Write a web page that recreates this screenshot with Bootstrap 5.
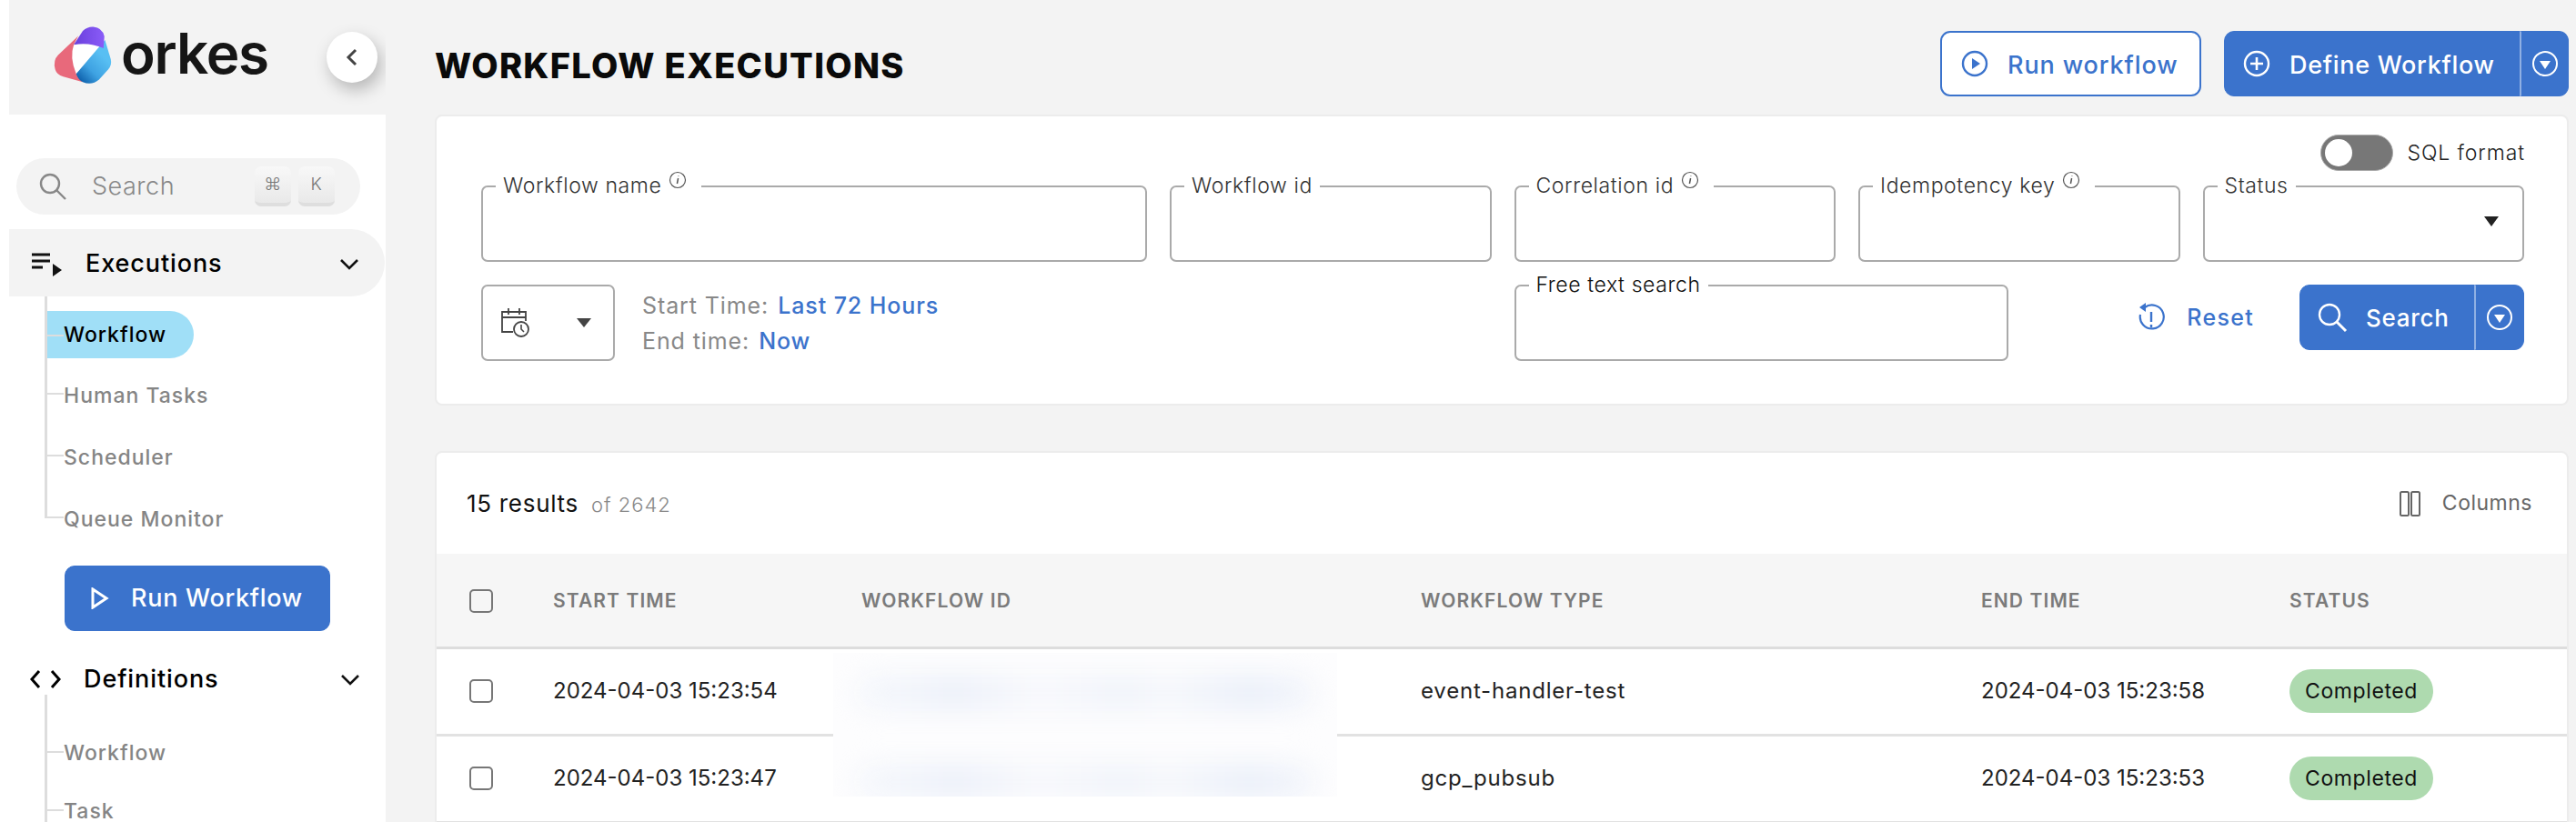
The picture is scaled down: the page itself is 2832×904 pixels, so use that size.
<!DOCTYPE html>
<html lang="en">
<head>
  <meta charset="UTF-8" />
  <title>Workflow Executions</title>
  <link href="https://cdn.jsdelivr.net/npm/bootstrap@5.3.3/dist/css/bootstrap.min.css" rel="stylesheet" />
  <style>
    html, body { height: 904px; overflow: hidden; }
    body { font-family: "Inter", "Liberation Sans", sans-serif; background: #f3f3f3; color: #111; font-size: 25px; }

    .side-bar { width: 424px; height: 904px; background: #fff; flex: none; overflow: hidden; }
    .side-head { height: 126px; margin-left: 10px; background: #f3f3f3; padding: 28px 9px 0 48px; }
    .side-head > svg { flex: none; }
    .logo-word { font-size: 62px; font-weight: 600; line-height: 62px; letter-spacing: -1.2px; color: #161616; margin-left: 9px; }
    .collapse-btn { width: 56px; height: 56px; margin: 7px 0 0 auto; border: 0; border-radius: 50%; background: #fff; box-shadow: 4px 8px 18px rgba(0,0,0,.25); padding: 0; }
    .side-search { height: 62px; margin: 48px 28px 16px 18px; background: #f3f3f3; border-radius: 31px; padding: 0 28px 0 25px; color: #888; font-size: 27px; font-weight: 300; letter-spacing: .5px; }
    .key-cap { width: 40px; height: 44px; border-radius: 7px; background: linear-gradient(#f8f8f8, #e9e9e9); border-bottom: 4px solid #dedede; font-size: 19px; color: #777; }
    .group-row { height: 74px; padding: 2px 29px 0 24px; font-size: 27px; font-weight: 500; color: #000; letter-spacing: .9px; }
    .group-open { margin-left: 10px; padding-left: 25px; background: #f3f3f3; border-radius: 0 37px 37px 0; height: 74px; width: 413px; }
    .group-icon { width: 34px; margin-right: 25px; }
    .tree-list { margin: 0 0 0 49px; padding: 16px 0 0; list-style: none; border-left: 3px solid #ddd; }
    .tree-item { position: relative; height: 68px; padding-left: 18px; font-size: 23px; font-weight: 500; color: #858585; letter-spacing: 1px; }
    .tree-item::before { content: ""; position: absolute; left: 0; top: 33px; width: 18px; height: 2px; background: #ddd; }
    .tree-first { height: 52px; margin-bottom: 5px; line-height: 52px; color: #000; width: 161px; background: #a0dff7; border-radius: 0 26px 26px 0; }
    .tree-first::before { top: 26px; }
    .tree-item.tree-plain { display: flex; align-items: center; padding-top: 5px; }
    .tree-last::after { content: ""; position: absolute; left: -3px; top: 35px; width: 3px; height: 33px; background: #fff; }
    .tree-item.tree-short { height: 64px; padding-top: 2px; }
    .tree-short::before { top: 31px; }
    .tree-defs { margin-top: -17px; padding-top: 31px; }
    .side-run { width: 292px; height: 72px; margin: 19px 0 17px 71px; border-radius: 11px; font-size: 27px; font-weight: 500; letter-spacing: 1px; }

    .main-area { padding: 0 8px 0 54px; min-width: 0; }
    .page-head { height: 126px; padding-top: 34px; }
    .page-title { font-size: 38px; font-weight: 800; margin: 0; letter-spacing: 1.3px; color: #0a0a0a; }
    .blue-btn { --bs-btn-bg: #3b73cc; --bs-btn-border-color: #3b73cc; --bs-btn-color: #fff; --bs-btn-hover-bg: #3b73cc; --bs-btn-hover-color: #fff; font-size: 27px; font-weight: 500; height: 72px; border-radius: 11px; display: flex; align-items: center; letter-spacing: .7px; }
    .outline-btn { width: 287px; height: 72px; background: #fff; border: 2px solid #3b73cc; color: #3b73cc; border-radius: 11px; font-size: 27px; font-weight: 500; margin-right: 25px; padding: 0 0 0 21px; letter-spacing: .9px; }
    .split-end { border-left: 2px solid #8fb0e3 !important; padding: 0; justify-content: center; }

    .panel-box { background: #fff; border: 2px solid #ececec; border-radius: 8px; }
    .filter-box { height: 320px; padding: 20px 47px 0 49px; margin-bottom: 50px; }
    .sql-toggle { height: 40px; margin: 0 -1px 16px 0; font-size: 23px; font-weight: 300; color: #222; letter-spacing: .9px; }
    .toggle-track { width: 80px; height: 40px; border-radius: 20px; background: #777; margin-right: 15px; padding: 4px; border: 1px solid #aaa; }
    .toggle-knob { width: 30px; height: 30px; border-radius: 50%; background: #fff; }
    .field-grid { display: grid; grid-template-columns: repeat(6, 1fr); column-gap: 25px; row-gap: 25px; }
    .field-box { position: relative; height: 84px; border: 2px solid #aaa; border-radius: 7px; }
    .field-wide { grid-column: span 2; }
    .field-label { position: absolute; left: 14px; top: -16px; height: 28px; line-height: 28px; padding: 0 8px; background: #fff; font-size: 23px; font-weight: 300; color: #333; display: flex; letter-spacing: .6px; }
    .info-mark { display: inline-block; width: 20px; height: 20px; margin: -2px 8px 0 8px; }
    .status-caret { position: absolute; right: 26px; top: 32px; width: 0; height: 0; border: 8px solid transparent; border-top: 11px solid #222; border-bottom: 0; }
    .date-cell { grid-column: span 3; }
    .date-box { width: 147px; height: 84px; border: 2px solid #aaa; border-radius: 7px; margin-right: 30px; padding: 0 24px 0 19px; }
    .date-caret { width: 0; height: 0; border: 8px solid transparent; border-top: 10px solid #444; border-bottom: 0; }
    .date-line { height: 39px; padding-top: 2px; font-size: 25px; font-weight: 400; color: #888; letter-spacing: .9px; }
    .date-line span { color: #3b73cc; font-weight: 500; margin-left: 10px; }
    .query-cell { grid-column: span 3; }
    .free-box { width: 543px; }
    .reset-link { color: #3b73cc; font-size: 25px; font-weight: 500; margin-right: 50px; letter-spacing: 1.3px; padding-top: 2px; }

    .result-box { overflow: hidden; height: 500px; position: relative; }
    .result-head { height: 111px; padding: 0 38px 0 33px; }
    .result-count { font-size: 26px; font-weight: 400; color: #111; letter-spacing: .7px; }
    .result-of { font-size: 22px; font-weight: 300; color: #888; margin-left: 14px; letter-spacing: 1px; }
    .column-link { font-size: 23px; font-weight: 400; color: #666; letter-spacing: .5px; }
    .run-table { table-layout: fixed; width: 100%; margin: 0; --bs-table-bg: transparent; }
    .run-table th { height: 103px; background: #f6f6f6; font-size: 21px; font-weight: 600; color: #7b7b7b; padding: 2px 0 0; vertical-align: middle; border-bottom: 3px solid #ddd; letter-spacing: 1.1px; }
    .run-table td { height: 96px; font-size: 24px; font-weight: 400; color: #222; padding: 0; vertical-align: middle; border-bottom: 3px solid #e2e2e2; }
    .run-table .type-cell { letter-spacing: .8px; }
    .row-check { width: 26px; height: 26px; border: 2px solid #777; border-radius: 5px; margin-left: 36px; }
    .status-pill { display: inline-block; width: 158px; height: 48px; line-height: 48px; border-radius: 24px; background: #aedaaf; color: #111; text-align: center; font-size: 23px; letter-spacing: .6px; }
    .blur-patch { position: absolute; left: 436px; top: 220px; width: 554px; height: 158px; background: #fdfdfe; overflow: hidden; }
    .blur-smear { height: 40px; margin: 24px 24px 0; border-radius: 20px; background: linear-gradient(90deg, #f6f8fc, #ecf0f9 22%, #f7f8fc 40%, #f0f3fa 58%, #f5f7fb 68%, #eaeff9 86%, #f4f6fb); filter: blur(14px); }
    .blur-smear + .blur-smear { margin-top: 58px; }
  </style>
</head>
<body>
  <div class="d-flex">
    <aside class="side-bar">
      <div class="side-head d-flex">
        <svg width="66" height="68" viewBox="50 24 200 205" aria-hidden="true">
          <defs>
            <linearGradient id="blueFill" x1="0.2" y1="1" x2="0.75" y2="0.35"><stop offset="0" stop-color="#0f62ad"/><stop offset=".45" stop-color="#3ea2e2"/><stop offset="1" stop-color="#58bff3"/></linearGradient>
            <linearGradient id="purpleFill" x1="0" y1="0.5" x2="1" y2="0.5"><stop offset="0" stop-color="#6a3fdc"/><stop offset="1" stop-color="#8a5cf8"/></linearGradient>
          </defs>
          <path fill="#fff" d="M120 88Q170 80 222 100L128 185Q105 130 120 88Z"/>
          <path fill="#e8697b" d="M135 58L68 122Q50 140 58 170Q63 188 85 194L150 212L128 185Q105 130 120 88Z"/>
          <path d="M224 72L243 135Q248 155 235 170L205 203Q180 225 150 212Q135 205 128 185Z" style="fill:url(#blueFill)"/>
          <path d="M120 88L150 42Q165 27 185 28Q215 30 222 60L219 99Q170 78 120 88Z" style="fill:url(#purpleFill)"/>
        </svg>
        <span class="logo-word">orkes</span>
        <button class="collapse-btn d-flex align-items-center justify-content-center" type="button" aria-label="Collapse">
          <svg width="16" height="22" viewBox="0 0 16 22"><path d="M12 3 4 11l8 8" fill="none" stroke="#444" stroke-width="3"/></svg>
        </button>
      </div>

      <div class="side-search d-flex align-items-center">
        <svg width="30" height="30" viewBox="0 0 30 30" class="me-4"><circle cx="12" cy="12" r="10" fill="none" stroke="#888" stroke-width="2.4"/><path d="M19 19l10 10" stroke="#888" stroke-width="2.4"/></svg>
        <span class="ms-1 flex-grow-1">Search</span>
        <span class="key-cap d-flex align-items-center justify-content-center me-2">⌘</span>
        <span class="key-cap d-flex align-items-center justify-content-center">K</span>
      </div>

      <div class="group-row group-open d-flex align-items-center">
        <svg class="group-icon" height="28" viewBox="0 0 34 28"><path d="M0 4h20M0 11h20M0 18h12" stroke="#111" stroke-width="3"/><path d="M23 14l10 7-10 7z" fill="#111"/></svg>
        <span class="flex-grow-1">Executions</span>
        <svg width="20" height="13" viewBox="0 0 20 13"><path d="M1 2l9 9 9-9" fill="none" stroke="#111" stroke-width="2.6"/></svg>
      </div>
      <ul class="tree-list">
        <li class="tree-item tree-first">Workflow</li>
        <li class="tree-item tree-plain">Human Tasks</li>
        <li class="tree-item tree-plain">Scheduler</li>
        <li class="tree-item tree-plain tree-last">Queue Monitor</li>
      </ul>
      <button class="btn blue-btn side-run" type="button">
        <svg width="20" height="24" viewBox="0 0 20 24" class="ms-3 me-4"><path d="M2 2l15 10L2 22z" fill="none" stroke="#fff" stroke-width="3"/></svg>
        Run Workflow
      </button>

      <div class="group-row d-flex align-items-center" style="height:70px">
        <svg class="group-icon" height="22" viewBox="0 0 34 22" style="margin-left:9px"><path d="M10 2l-8 9 8 9M24 2l8 9-8 9" fill="none" stroke="#000" stroke-width="3"/></svg>
        <span class="flex-grow-1">Definitions</span>
        <svg width="20" height="13" viewBox="0 0 20 13"><path d="M1 2l9 9 9-9" fill="none" stroke="#111" stroke-width="2.6"/></svg>
      </div>
      <ul class="tree-list tree-defs">
        <li class="tree-item tree-plain tree-short">Workflow</li>
        <li class="tree-item tree-plain tree-short">Task</li>
      </ul>
    </aside>

    <main class="main-area flex-grow-1">
      <div class="page-head d-flex justify-content-between">
        <h1 class="page-title mt-3">WORKFLOW EXECUTIONS</h1>
        <div class="d-flex">
          <button class="outline-btn d-flex align-items-center" type="button">
            <svg width="30" height="30" viewBox="0 0 30 30" style="margin-right:21px"><circle cx="15" cy="15" r="13" fill="none" stroke="#3b73cc" stroke-width="2.4"/><path d="M12 9l9 6-9 6z" fill="#3b73cc"/></svg>
            <span class="pt-1">Run workflow</span>
          </button>
          <div class="btn-group">
            <button class="btn blue-btn" type="button" style="width:326px;padding-left:20px">
              <svg width="30" height="30" viewBox="0 0 30 30" style="margin-right:21px"><circle cx="15" cy="15" r="13" fill="none" stroke="#fff" stroke-width="2.4"/><path d="M15 8v14M8 15h14" stroke="#fff" stroke-width="2.6"/></svg>
              <span class="pt-1">Define Workflow</span>
            </button>
            <button class="btn blue-btn split-end" type="button" style="width:54px" aria-label="More">
              <svg width="30" height="30" viewBox="0 0 30 30"><circle cx="15" cy="15" r="13" fill="none" stroke="#fff" stroke-width="2"/><path d="M9 12h12l-6 9z" fill="#fff"/></svg>
            </button>
          </div>
        </div>
      </div>

      <section class="panel-box filter-box">
        <div class="sql-toggle d-flex justify-content-end align-items-center">
          <span class="toggle-track d-flex"><span class="toggle-knob"></span></span>
          SQL format
        </div>
        <div class="field-grid">
          <div class="field-box field-wide"><span class="field-label">Workflow name<svg class="info-mark" viewBox="0 0 20 20"><circle cx="10" cy="10" r="8.5" fill="none" stroke="#555" stroke-width="1.2"/><path d="M10.6 8l-1.2 6M10.9 5.2v.6" stroke="#555" stroke-width="1.5"/></svg></span></div>
          <div class="field-box"><span class="field-label">Workflow id</span></div>
          <div class="field-box"><span class="field-label">Correlation id<svg class="info-mark" viewBox="0 0 20 20"><circle cx="10" cy="10" r="8.5" fill="none" stroke="#555" stroke-width="1.2"/><path d="M10.6 8l-1.2 6M10.9 5.2v.6" stroke="#555" stroke-width="1.5"/></svg></span></div>
          <div class="field-box"><span class="field-label">Idempotency key<svg class="info-mark" viewBox="0 0 20 20"><circle cx="10" cy="10" r="8.5" fill="none" stroke="#555" stroke-width="1.2"/><path d="M10.6 8l-1.2 6M10.9 5.2v.6" stroke="#555" stroke-width="1.5"/></svg></span></div>
          <div class="field-box"><span class="field-label">Status</span><span class="status-caret"></span></div>

          <div class="date-cell d-flex align-items-center">
            <div class="date-box d-flex align-items-center justify-content-between">
              <svg width="32" height="34" viewBox="0 0 32 34"><path d="M14 27H2V5h26v10M2 11h26M9 1v7M21 1v7" fill="none" stroke="#444" stroke-width="1.8"/><circle cx="23" cy="24" r="8" fill="#fff" stroke="#444" stroke-width="1.8"/><path d="M23 19v5l3 3" fill="none" stroke="#444" stroke-width="1.6"/></svg>
              <span class="date-caret"></span>
            </div>
            <div>
              <div class="date-line">Start Time:<span>Last 72 Hours</span></div>
              <div class="date-line">End time:<span>Now</span></div>
            </div>
          </div>
          <div class="query-cell d-flex">
            <div class="field-box free-box"><span class="field-label" style="color:#111">Free text search</span></div>
            <div class="ms-auto d-flex align-items-start">
              <span class="reset-link d-flex align-items-center" style="height:72px">
                <svg width="30" height="34" viewBox="0 0 30 34" class="me-4"><path d="M8 5a13 13 0 1 1-5 8" fill="none" stroke="#3b73cc" stroke-width="2.2"/><path d="M9 0v10L2 5z" fill="#3b73cc"/><path d="M15 10v11M15 24v3" stroke="#3b73cc" stroke-width="2.4"/></svg>
                Reset
              </span>
              <div class="btn-group">
                <button class="btn blue-btn" type="button" style="width:193px;padding-left:18px;font-size:26px">
                  <svg width="34" height="34" viewBox="0 0 34 34" style="margin-right:20px"><circle cx="14" cy="14" r="11" fill="none" stroke="#fff" stroke-width="2.4"/><path d="M22 22l10 10" stroke="#fff" stroke-width="3"/></svg>
                  Search
                </button>
                <button class="btn blue-btn split-end" type="button" style="width:55px" aria-label="More">
                  <svg width="30" height="30" viewBox="0 0 30 30"><circle cx="15" cy="15" r="13" fill="none" stroke="#fff" stroke-width="2"/><path d="M9 12h12l-6 9z" fill="#fff"/></svg>
                </button>
              </div>
            </div>
          </div>
        </div>
      </section>

      <section class="panel-box result-box">
        <div class="result-head d-flex align-items-center justify-content-between">
          <div><span class="result-count">15 results</span><span class="result-of">of 2642</span></div>
          <div class="column-link d-flex align-items-center">
            <svg width="23" height="28" viewBox="0 0 23 28" class="me-4"><rect x="1" y="1" width="9" height="26" rx="1.5" fill="none" stroke="#666" stroke-width="2"/><rect x="13" y="1" width="9" height="26" rx="1.5" fill="none" stroke="#666" stroke-width="2"/></svg>
            Columns
          </div>
        </div>
        <table class="table run-table">
          <colgroup><col style="width:128px"><col style="width:339px"><col style="width:615px"><col style="width:616px"><col style="width:339px"><col></colgroup>
          <thead>
            <tr><th><div class="row-check"></div></th><th>START TIME</th><th>WORKFLOW ID</th><th>WORKFLOW TYPE</th><th>END TIME</th><th>STATUS</th></tr>
          </thead>
          <tbody>
            <tr><td><div class="row-check"></div></td><td>2024-04-03 15:23:54</td><td></td><td class="type-cell">event-handler-test</td><td>2024-04-03 15:23:58</td><td><span class="status-pill">Completed</span></td></tr>
            <tr><td><div class="row-check"></div></td><td>2024-04-03 15:23:47</td><td></td><td class="type-cell">gcp_pubsub</td><td>2024-04-03 15:23:53</td><td><span class="status-pill">Completed</span></td></tr>
          </tbody>
        </table>
        <div class="blur-patch"><div class="blur-smear"></div><div class="blur-smear"></div></div>
      </section>
    </main>
  </div>
  <script src="https://cdn.jsdelivr.net/npm/bootstrap@5.3.3/dist/js/bootstrap.bundle.min.js"></script>
</body>
</html>
